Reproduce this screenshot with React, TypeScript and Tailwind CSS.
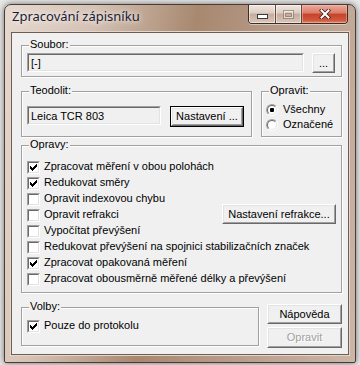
import type { ReactNode } from 'react'

const ui = "font-['Liberation_Sans',Arial,sans-serif] text-[11px] leading-[13px] text-black"

const Check = () => {
  const ys = [2, 3, 4, 3, 2, 1, 0]
  return (
    <svg width="7" height="7" viewBox="0 0 7 7" shapeRendering="crispEdges" className="block">
      {ys.map((y, x) => (
        <rect key={x} x={x} y={y} width="1" height="3" fill="#000" />
      ))}
    </svg>
  )
}

const Checkbox = ({ checked }: { checked?: boolean }) => (
  <div className="w-[13px] h-[13px] shrink-0 border border-t-[#a0a0a0] border-l-[#a0a0a0] border-r-white border-b-white">
    <div className="w-full h-full border border-t-[#696969] border-l-[#696969] border-r-[#e3e3e3] border-b-[#e3e3e3] bg-white pl-[1px] pt-[1px]">
      {checked && <Check />}
    </div>
  </div>
)

const Radio = ({ checked }: { checked?: boolean }) => (
  <div className="w-[12px] h-[12px] shrink-0 rounded-full border border-t-[#a0a0a0] border-l-[#a0a0a0] border-r-white border-b-white">
    <div className="w-full h-full rounded-full border border-t-[#696969] border-l-[#696969] border-r-[#e3e3e3] border-b-[#e3e3e3] bg-white flex items-center justify-center">
      {checked && <div className="w-[4px] h-[4px] rounded-[1px] bg-black" />}
    </div>
  </div>
)

const Edit = ({ value, className }: { value: string; className: string }) => (
  <div className={`${className} border border-t-[#a0a0a0] border-l-[#a0a0a0] border-r-white border-b-white`}>
    <div className="w-full h-full border border-t-[#696969] border-l-[#696969] border-r-[#e3e3e3] border-b-[#e3e3e3] bg-[#f0f0f0] pl-[2px] pt-[2px]">
      {value}
    </div>
  </div>
)

type BtnProps = { children: ReactNode; className: string; isDefault?: boolean; disabled?: boolean }

const Button = ({ children, className, isDefault, disabled }: BtnProps) => {
  const face = (
    <div className="w-full h-full border border-t-white border-l-white border-r-[#696969] border-b-[#696969]">
      <div
        className={`w-full h-full border border-t-[#e3e3e3] border-l-[#e3e3e3] border-r-[#a0a0a0] border-b-[#a0a0a0] bg-[#f0f0f0] flex items-center justify-center ${
          disabled ? 'text-[#a0a0a0] [text-shadow:1px_1px_0_#fff]' : ''
        }`}
      >
        {children}
      </div>
    </div>
  )
  return isDefault ? (
    <div className={`${className} shrink-0 border border-black`}>{face}</div>
  ) : (
    <div className={`${className} shrink-0`}>{face}</div>
  )
}

const Group = ({ label, className, children }: { label: string; className: string; children?: ReactNode }) => (
  <div className={`${className} relative shrink-0 border border-[#a0a0a0] shadow-[inset_1px_1px_0_#fff,1px_1px_0_#fff]`}>
    <span className="absolute -top-[8px] left-[7px] px-[1px] bg-[#f0f0f0]">{label}</span>
    {children}
  </div>
)

const Row = ({ checked, label, children }: { checked?: boolean; label: string; children?: ReactNode }) => (
  <div className="flex items-start h-[16px]">
    <div className="mt-[1px]">
      <Checkbox checked={checked} />
    </div>
    <span className="ml-[4px] whitespace-nowrap">{label}</span>
    {children}
  </div>
)

const opravy: [string, boolean][] = [
  ['Zpracovat měření v obou polohách', true],
  ['Redukovat směry', true],
  ['Opravit indexovou chybu', false],
  ['Opravit refrakci', false],
  ['Vypočítat převýšení', false],
  ['Redukovat převýšení na spojnici stabilizačních značek', false],
  ['Zpracovat opakovaná měření', true],
  ['Zpracovat obousměrně měřené délky a převýšení', false],
]

const CaptionButtons = () => (
  <div className="ml-auto mr-[7px] flex h-[19px] rounded-b-[4px] border border-t-0 border-[#3b2e27] overflow-hidden shadow-[0_1px_0_rgba(255,255,255,0.45)]">
    <div className="w-[27px] h-full flex items-end justify-center pb-[4px] border-r border-[#5a4a40] bg-[linear-gradient(#f1e8e2,#dccbc0_45%,#c5ac9c_50%,#d9c6ba)] shadow-[inset_0_0_0_1px_rgba(255,255,255,0.5)]">
      <svg width="11" height="5" viewBox="0 0 11 5" className="block">
        <rect x="0.5" y="0.5" width="10" height="4" fill="#fff" stroke="#3a3a3a" />
      </svg>
    </div>
    <div className="w-[26px] h-full flex items-center justify-center border-r border-[#5a4a40] bg-[linear-gradient(#f1e8e2,#dccbc0_45%,#c5ac9c_50%,#d9c6ba)] shadow-[inset_0_0_0_1px_rgba(255,255,255,0.5)]">
      <svg width="11" height="9" viewBox="0 0 11 9" className="block opacity-50">
        <rect x="0.5" y="0.5" width="10" height="8" fill="none" stroke="#6d5d55" />
        <rect x="1.5" y="1.5" width="8" height="6" fill="none" stroke="#fff" />
        <rect x="2.5" y="3.5" width="6" height="3" fill="none" stroke="#6d5d55" />
      </svg>
    </div>
    <div className="w-[45px] h-full flex items-center justify-center bg-[linear-gradient(#eaa99b,#dc7c68_45%,#c4432b_50%,#d2573d_85%,#e08a6c)] shadow-[inset_0_0_0_1px_rgba(255,200,190,0.45)]">
      <svg width="12" height="10" viewBox="0 0 12 10" className="block">
        <path d="M2.5 1.5 L9.5 8.5 M9.5 1.5 L2.5 8.5" stroke="#3b2020" strokeWidth="3.6" strokeLinecap="square" />
        <path d="M2.5 1.5 L9.5 8.5 M9.5 1.5 L2.5 8.5" stroke="#fff" strokeWidth="2" strokeLinecap="square" />
      </svg>
    </div>
  </div>
)

export default function App() {
  return (
    <div className="w-[360px] h-[365px] bg-[#e8e8e8] pt-[4px] pl-[4px] overflow-hidden">
      <div className="w-[352px] h-[359px] rounded-t-[7px] rounded-b-[2px] border border-[#4a3b33] bg-[linear-gradient(100deg,#e6d9cf_0%,#d4c1b4_22%,#a8886f_47%,#b39582_62%,#cbb6a8_100%)] shadow-[0_0_6px_rgba(0,0,0,0.55)]">
        <div className="h-[27px] flex items-start">
          <span className="pl-[7px] pt-[3px] font-['Noto_Sans',sans-serif] text-[13px] leading-[17px] text-[#1b1b33] [text-shadow:0_0_8px_rgba(255,255,255,0.9),0_0_4px_rgba(255,255,255,0.7)]">
            Zpracování zápisníku
          </span>
          <CaptionButtons />
        </div>
        <div className={`${ui} ml-[6px] w-[338px] h-[323px] border border-[#6f5d52] bg-[#f0f0f0] shadow-[0_0_0_1px_#e3d6cc] pl-[9px] pt-[12px]`}>
          <Group label="Soubor:" className="w-[321px] h-[32px] flex items-start pl-[5px] pt-[7px]">
            <Edit value="[-]" className="w-[277px] h-[19px]" />
            <Button className="ml-[8px] w-[23px] h-[20px]">...</Button>
          </Group>

          <div className="flex mt-[14px]">
            <Group label="Teodolit:" className="w-[231px] h-[46px] flex items-start pl-[5px] pt-[14px]">
              <Edit value="Leica TCR 803" className="w-[134px] h-[19px]" />
              <Button isDefault className="ml-[9px] w-[74px] h-[21px]">
                Nastavení ...
              </Button>
            </Group>
            <Group label="Opravit:" className="ml-[9px] w-[81px] h-[46px] pl-[4px] pt-[10px]">
              <div className="flex items-center h-[15px]">
                <Radio checked />
                <span className="ml-[5px]">Všechny</span>
              </div>
              <div className="flex items-center h-[15px]">
                <Radio />
                <span className="ml-[5px]">Označené</span>
              </div>
            </Group>
          </div>

          <Group label="Opravy:" className="mt-[8px] w-[321px] h-[148px] pl-[5px] pr-[5px] pt-[14px]">
            {opravy.map(([label, checked], i) => (
              <Row key={label} label={label} checked={checked}>
                {i === 3 && (
                  <Button className="ml-auto -mt-[4px] w-[114px] h-[20px]">Nastavení refrakce...</Button>
                )}
              </Row>
            ))}
          </Group>

          <div className="flex items-start mt-[11px]">
            <Group label="Volby:" className="mt-[3px] w-[238px] h-[39px] pl-[5px] pt-[11px]">
              <Row label="Pouze do protokolu" checked />
            </Group>
            <div className="ml-[8px] flex flex-col">
              <Button className="w-[75px] h-[20px]">Nápověda</Button>
              <Button disabled className="mt-[3px] w-[75px] h-[21px]">
                Opravit
              </Button>
            </div>
          </div>
        </div>
      </div>
    </div>
  )
}
